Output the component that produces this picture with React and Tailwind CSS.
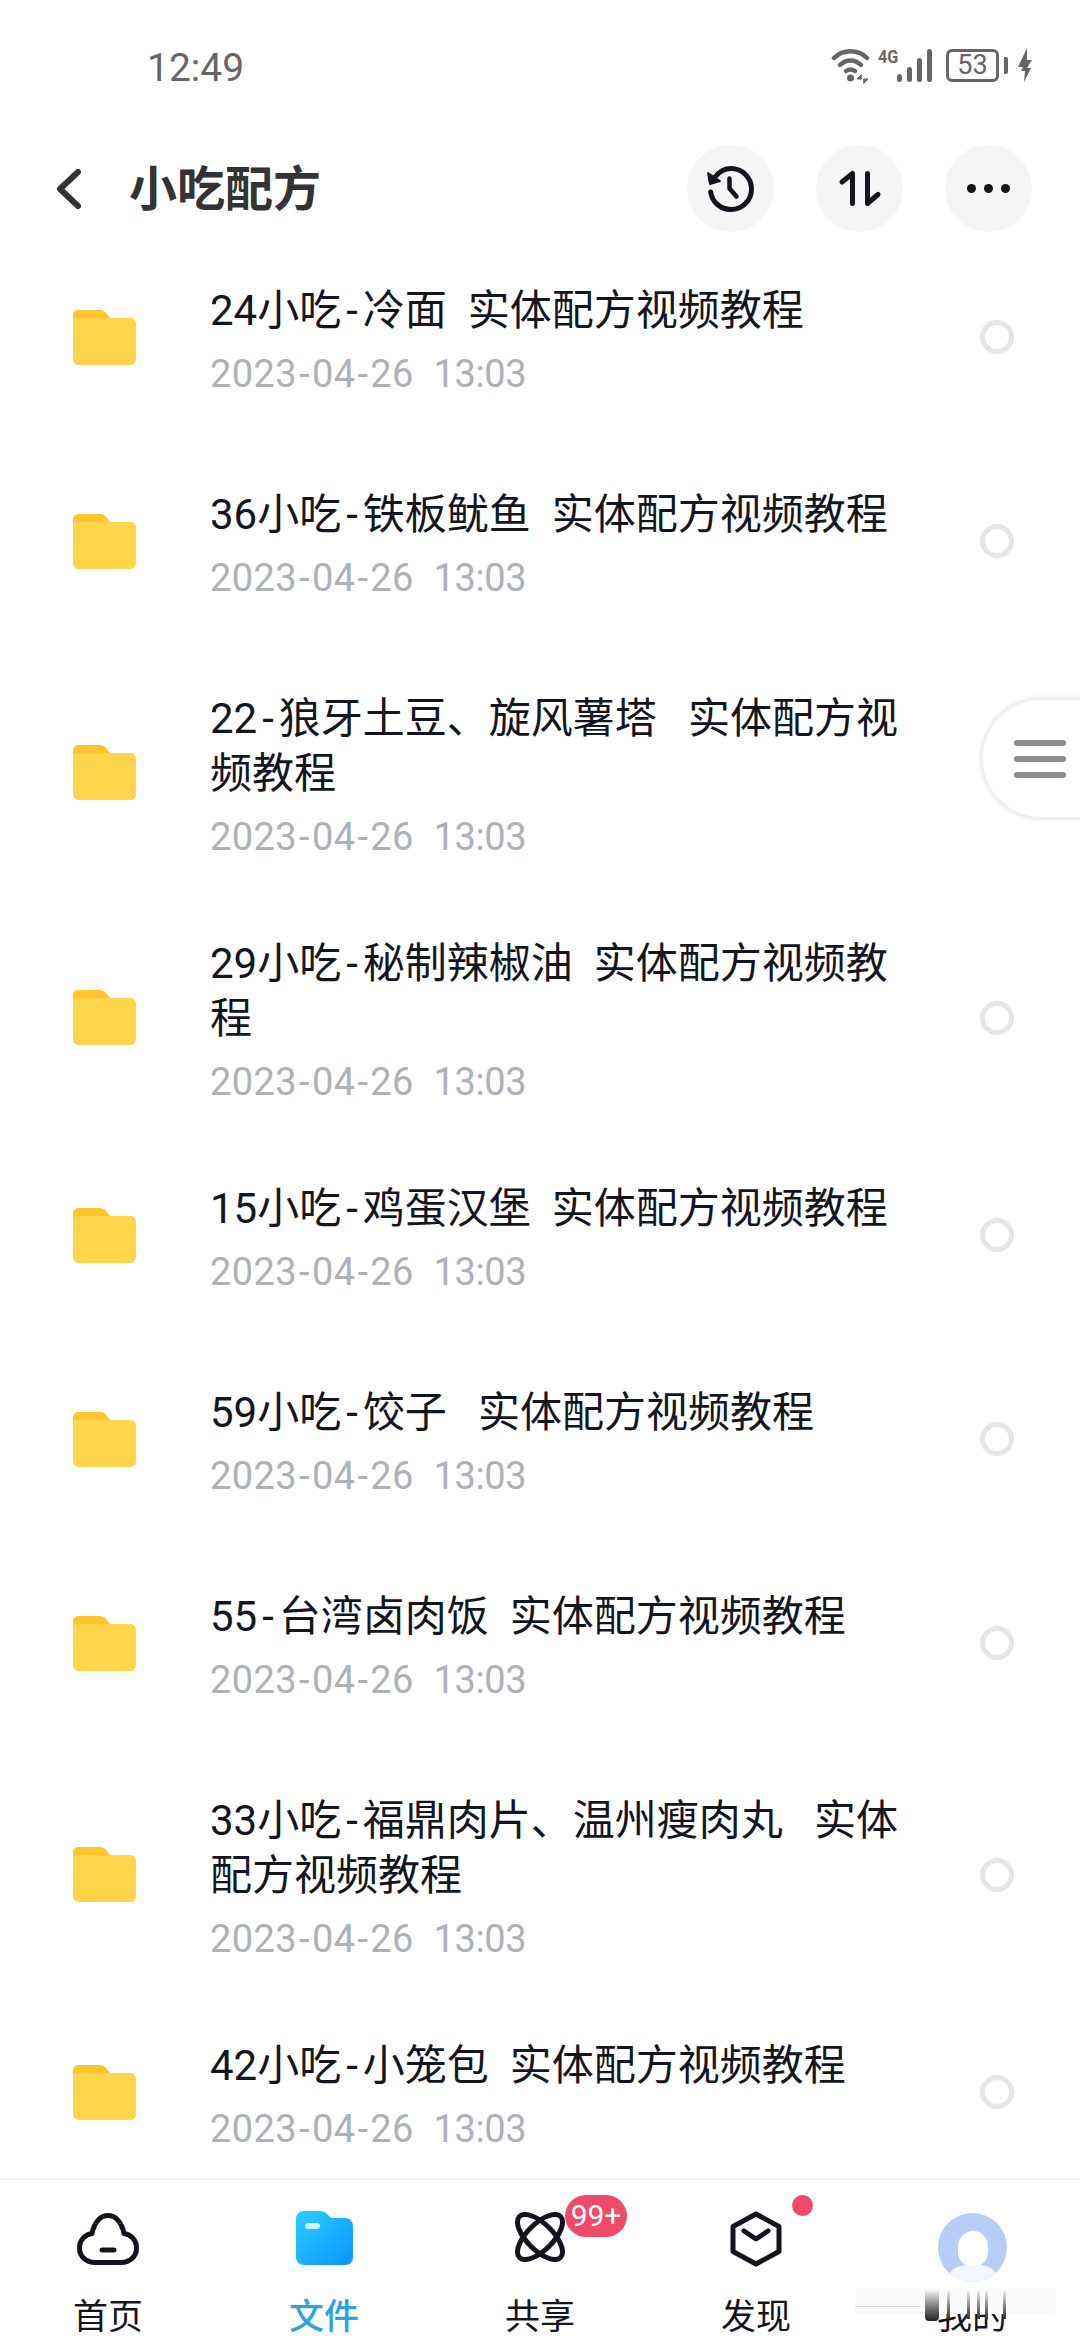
import React from 'react';

const rows = [
  { name: '24小吃', rest: '冷面  实体配方视频教程' },
  { name: '36小吃', rest: '铁板鱿鱼  实体配方视频教程' },
  { name: '22', rest: '狼牙土豆、旋风薯塔   实体配方视频教程', double: true, covered: true },
  { name: '29小吃', rest: '秘制辣椒油  实体配方视频教程', double: true },
  { name: '15小吃', rest: '鸡蛋汉堡  实体配方视频教程' },
  { name: '59小吃', rest: '饺子   实体配方视频教程' },
  { name: '55', rest: '台湾卤肉饭  实体配方视频教程' },
  { name: '33小吃', rest: '福鼎肉片、温州瘦肉丸   实体配方视频教程', double: true },
  { name: '42小吃', rest: '小笼包  实体配方视频教程' },
];

const FolderIcon = () => (
  <svg width="63" height="55" viewBox="0 0 63 55" className="shrink-0">
    <path d="M6 0H26C29 0 31 1 33 3L37 8H57C60.5 8 63 10.5 63 14V49C63 52.5 60.5 55 57 55H6C2.5 55 0 52.5 0 49V6C0 2.5 2.5 0 6 0Z" fill="#ffd64b" />
    <path d="M6 0H26C29 0 31 1 33 3L37 8H6C3 8 0 9 0 10V6C0 2.5 2.5 0 6 0Z" fill="#ffc52e" />
  </svg>
);

const Row = ({ name, rest, double, covered }) => (
  <div className={`flex items-center pl-[73px] ${double ? 'h-[245px] pt-[14px]' : 'h-[204px]'}`}>
    <FolderIcon />
    <div className="ml-[74px] w-[700px] mt-[3px]">
      <p className="text-[42px] leading-[55px] text-[#14161f] whitespace-pre-wrap">
        {name}<span className="mx-[5px]">-</span>{rest}
      </p>
      <p className="mt-[15px] text-[38px] leading-[42px] text-[#adb1b8] whitespace-pre tracking-[0.4px]">
        2023<span className="mx-[2px]">-</span>04<span className="mx-[2px]">-</span>26  <span className="tracking-[-0.4px]">13:03</span>
      </p>
    </div>
    <div className={`ml-[70px] w-[34px] h-[34px] rounded-full border-[5px] border-[#e6e6e6] shrink-0 ${covered ? 'invisible' : ''}`} />
  </div>
);

const StatusIcons = () => (
  <div className="flex items-start text-[#666666]">
    <svg width="40" height="36" viewBox="0 0 40 36" fill="none" stroke="#666666" strokeLinecap="round" strokeWidth="4.5">
      <path d="M3 10C12 1 27 1 36 10" />
      <path d="M9 17C15 11 24 11 30 17" />
      <path d="M15 23C18 21 21 21 24 23" />
      <circle cx="19.5" cy="30" r="3.5" fill="#666666" stroke="none" />
      <path d="M30 27L26 31H30ZM33 35L37 31H33Z" fill="#666666" strokeWidth="1" />
    </svg>
    <span className="ml-[7px] mt-[1px] text-[18px] leading-[16px] font-bold w-[20px] scale-x-90 origin-left">4G</span>
    <svg width="35" height="33" viewBox="0 0 35 33" className="-ml-[1px] mt-[1px]" fill="#666666">
      <rect x="0" y="25" width="5" height="8" rx="2.5" />
      <rect x="10" y="18" width="5" height="15" rx="2.5" />
      <rect x="20" y="9" width="5" height="24" rx="2.5" />
      <rect x="30" y="0" width="5" height="33" rx="2.5" />
    </svg>
    <div className="ml-[14px] mt-[1px] w-[53px] h-[33px] rounded-[6px] border-[3px] border-[#666666] flex items-center justify-center text-[27px] leading-none">53</div>
    <div className="ml-[5px] mt-[9px] w-[4px] h-[17px] rounded-r-[2px] bg-[#666666]" />
    <svg width="14" height="34" viewBox="0 0 14 34" className="ml-[10px]" fill="#666666">
      <path d="M9 0V12H14L9 20H13L6 34L7 23H3L5 19H0Z" />
    </svg>
  </div>
);

const Header = () => (
  <div className="flex items-center h-[87px] mt-[24px] pl-[56px] pr-[48px]">
    <svg width="26" height="40" viewBox="0 0 26 40" fill="none" stroke="#333333" strokeWidth="6" strokeLinecap="round" strokeLinejoin="round">
      <path d="M22 3L4 20L22 37" />
    </svg>
    <h1 className="ml-[47px] mt-[2px] text-[48px] font-bold text-[#333333] leading-none">小吃配方</h1>
    <div className="ml-auto flex gap-[42px]">
      <div className="w-[87px] h-[87px] rounded-full bg-[#f5f5f6] flex items-center justify-center">
        <svg width="50" height="50" viewBox="0 0 50 50" fill="none" stroke="#14141f" strokeWidth="5" strokeLinecap="round" strokeLinejoin="round">
          <path d="M9.5 12.5C13.5 7.5 19 4.5 25 4.5C36.3 4.5 45.5 13.7 45.5 25C45.5 36.3 36.3 45.5 25 45.5C14.5 45.5 6 38 4.7 28" />
          <path d="M2 9L4 20L14 17Z" fill="#14141f" stroke="#14141f" strokeWidth="2" />
          <path d="M23.5 14.5V24.5L30.5 32.5" strokeWidth="4.5" />
        </svg>
      </div>
      <div className="w-[87px] h-[87px] rounded-full bg-[#f5f5f6] flex items-center justify-center">
        <svg width="50" height="50" viewBox="0 0 50 50" fill="none" stroke="#14141f" strokeWidth="5" strokeLinecap="round" strokeLinejoin="round">
          <path d="M7 18L17.5 9.5V39.5" />
          <path d="M32.5 9.5V39.5L43 30.5" />
        </svg>
      </div>
      <div className="w-[87px] h-[87px] rounded-full bg-[#f5f5f6] flex items-center justify-center gap-[8px]">
        <span className="w-[9px] h-[9px] rounded-full bg-[#14141f]" />
        <span className="w-[9px] h-[9px] rounded-full bg-[#14141f]" />
        <span className="w-[9px] h-[9px] rounded-full bg-[#14141f]" />
      </div>
    </div>
  </div>
);

const BottomNav = () => (
  <div className="relative h-[162px] shrink-0 border-t-2 border-[#f3f3f3] grid grid-cols-5 bg-white">
    <div className="flex flex-col items-center">
      <div className="h-[119px] pt-[33px]">
        <svg width="62" height="52" viewBox="0 0 62 52" fill="none" stroke="#14141f" strokeWidth="5" strokeLinecap="round" strokeLinejoin="round">
          <path d="M18 49.5H44C53 49.5 59.5 43.5 59.5 35C59.5 27 54 21.5 47 20.5C45 10 39 2.5 31 2.5C23 2.5 17 10 15 20.5C8 21.5 2.5 27 2.5 35C2.5 43.5 9 49.5 18 49.5Z" />
          <path d="M25 37H37" />
        </svg>
      </div>
      <span className="text-[35px] leading-[38px] text-[#14161f]">首页</span>
    </div>
    <div className="flex flex-col items-center">
      <div className="h-[119px] pt-[31px]">
        <svg width="57" height="54" viewBox="0 0 57 54">
          <defs>
            <linearGradient id="navFolder" x1="0" y1="0" x2="1" y2="1">
              <stop offset="0" stopColor="#2cceff" />
              <stop offset="1" stopColor="#0a94ff" />
            </linearGradient>
          </defs>
          <path d="M8 0H24C27 0 29 1 31 3L35 7H49C53.5 7 57 10.5 57 15V46C57 50.5 53.5 54 49 54H8C3.5 54 0 50.5 0 46V8C0 3.5 3.5 0 8 0Z" fill="url(#navFolder)" />
          <rect x="9" y="12" width="15" height="6" rx="3" fill="#ffffff" fillOpacity="0.8" />
        </svg>
      </div>
      <span className="text-[35px] leading-[38px] font-medium text-[#2aa3e0]">文件</span>
    </div>
    <div className="relative flex flex-col items-center">
      <div className="h-[119px] pt-[32px]">
        <svg width="52" height="50" viewBox="0 0 52 50" fill="none" stroke="#14141f" strokeWidth="5">
          <ellipse cx="26" cy="25" rx="29" ry="13" transform="rotate(45 26 25)" />
          <ellipse cx="26" cy="25" rx="29" ry="13" transform="rotate(-45 26 25)" />
        </svg>
      </div>
      <span className="text-[35px] leading-[38px] text-[#14161f]">共享</span>
      <span className="absolute left-[133px] top-[15px] w-[62px] h-[42px] rounded-full bg-[#f04a6a] text-white text-[30px] leading-[42px] text-center">99+</span>
    </div>
    <div className="relative flex flex-col items-center">
      <div className="h-[119px] pt-[31px]">
        <svg width="52" height="56" viewBox="0 0 52 56" fill="none" stroke="#14141f" strokeWidth="5" strokeLinecap="round" strokeLinejoin="round">
          <path d="M26 3L49 15.5V40.5L26 53L3 40.5V15.5Z" />
          <path d="M14 20L26 28L38 20" />
        </svg>
      </div>
      <span className="text-[35px] leading-[38px] text-[#14161f]">发现</span>
      <span className="absolute left-[144px] top-[15px] w-[21px] h-[21px] rounded-full bg-[#f04a6a]" />
    </div>
    <div className="relative flex flex-col items-center">
      <div className="h-[119px] pt-[33px]">
        <div className="relative w-[69px] h-[69px] rounded-full bg-[#b6cdf7] overflow-hidden">
          <div className="absolute left-[20px] top-[18px] w-[30px] h-[36px] rounded-full bg-white" />
          <div className="absolute left-[8px] top-[52px] w-[54px] h-[40px] rounded-full bg-[#f4f7fd]" />
        </div>
      </div>
      <span className="text-[35px] leading-[38px] text-[#14161f]">我的</span>
      {/* watermark smear over the label */}
      <div className="absolute left-[-9px] top-[108px] w-[200px] h-[26px] bg-[#fbfbfb]" />
      <div className="absolute left-[-9px] top-[126px] w-[66px] h-[1px] bg-[#d8d8d8]" />
      <div className="absolute left-[61px] top-[109px] w-[14px] h-[32px] rounded-b-[4px] bg-linear-to-b from-white to-[#222222]" />
      <div className="absolute left-[83px] top-[109px] w-[3px] h-[30px] bg-linear-to-b from-white to-[#333333]" />
      <div className="absolute left-[103px] top-[109px] w-[3px] h-[30px] bg-linear-to-b from-white to-[#333333]" />
      <div className="absolute left-[113px] top-[109px] w-[3px] h-[30px] bg-linear-to-b from-white to-[#333333]" />
      <div className="absolute left-[121px] top-[109px] w-[3px] h-[30px] bg-linear-to-b from-white to-[#333333]" />
      <div className="absolute left-[139px] top-[109px] w-[3px] h-[30px] bg-linear-to-b from-white to-[#333333]" />
    </div>
  </div>
);

const App = () => {
  return (
    <div className="relative w-[1080px] h-[2340px] bg-white flex flex-col overflow-hidden font-['Roboto','Noto_Sans_CJK_SC',sans-serif]">
      {/* Status bar */}
      <div className="flex items-start justify-between h-[124px] pt-[48px] pl-[147px] pr-[48px] shrink-0">
        <span className="text-[39px] leading-[40px] text-[#666666]">12:49</span>
        <StatusIcons />
      </div>

      <div className="shrink-0 -mt-[3px] h-[114px]">
        <Header />
      </div>

      {/* File list */}
      <div className="flex-1 overflow-hidden">
        {rows.map((row) => (
          <Row key={row.name + row.rest} {...row} />
        ))}
      </div>

      <BottomNav />

      {/* Floating side handle */}
      <div className="absolute left-[980px] top-[697px] w-[110px] h-[123px] rounded-l-full border-[3px] border-[#f0f0f0] bg-white shadow-[0_0_4px_#eeeeee] flex flex-col gap-[10px] pl-[31px] pt-[40px]">
        <span className="w-[52px] h-[6px] rounded-full bg-[#8c8c8c]" />
        <span className="w-[52px] h-[6px] rounded-full bg-[#8c8c8c]" />
        <span className="w-[52px] h-[6px] rounded-full bg-[#8c8c8c]" />
      </div>
    </div>
  );
};

export default App;
